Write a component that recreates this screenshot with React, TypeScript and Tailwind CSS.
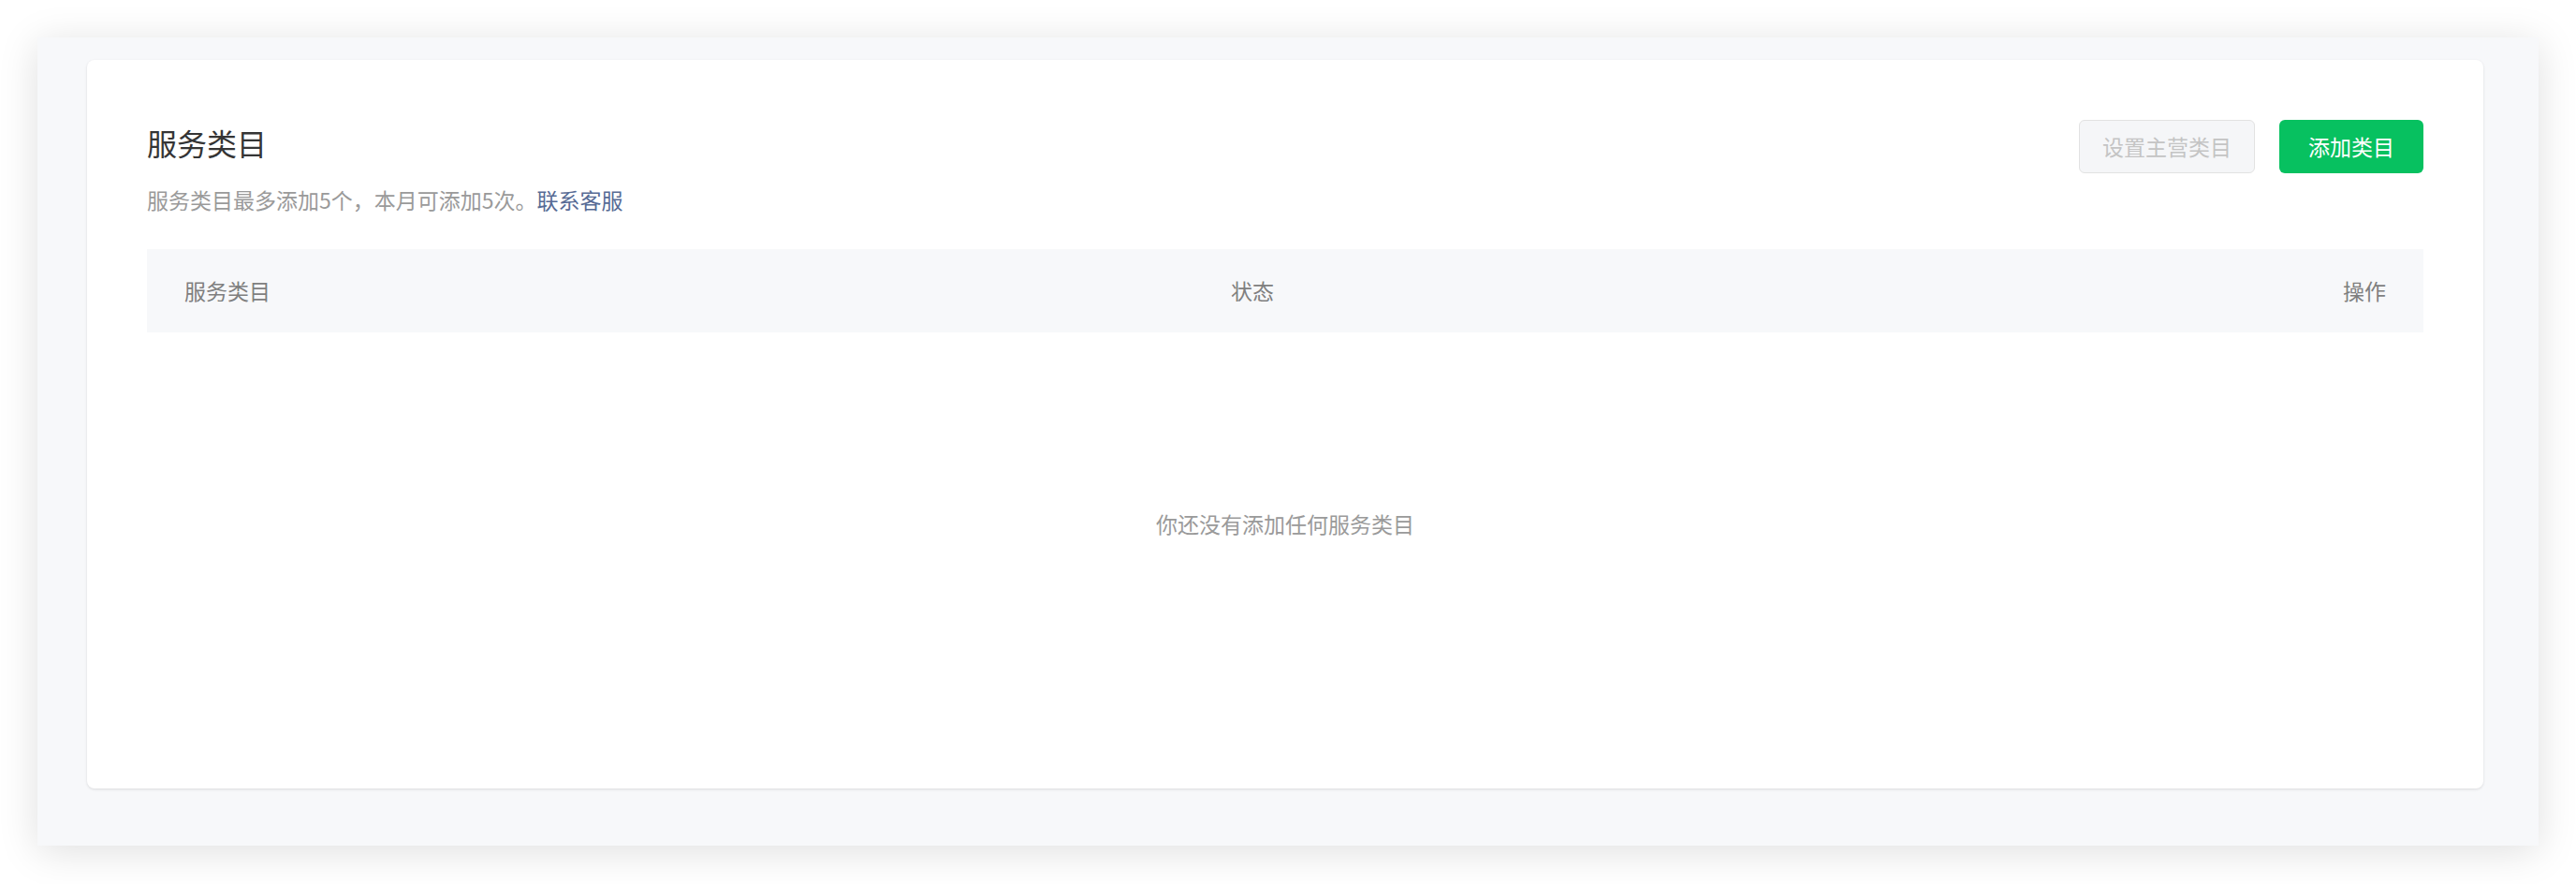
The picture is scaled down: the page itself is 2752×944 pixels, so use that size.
export default function App() {
  return (
    <div className="min-h-[944px] bg-white p-[40px] font-['Noto_Sans_CJK_SC','Noto_Sans',sans-serif]">
      <div className="bg-[#f7f8fa] pl-[53px] pr-[59px] pt-[24px] pb-[61px] shadow-[0_6px_40px_rgba(0,0,0,0.13)]">
        <div className="rounded-[8px] bg-white px-[64px] pt-[64px] pb-[79px] shadow-[0_1px_3px_rgba(0,0,0,0.12)]">
          <div className="flex items-start justify-between">
            <div>
              <h1 className="text-[32px] leading-[48px] font-normal text-[#353535]">服务类目</h1>
              <p className="mt-[20px] text-[23px] leading-[34px] text-[#9a9a9a]">
                服务类目最多添加5个，本月可添加5次。
                <a className="text-[#576b95]">联系客服</a>
              </p>
            </div>
            <div className="flex gap-[26px]">
              <button className="flex h-[57px] w-[188px] items-center justify-center rounded-[6px] border border-[#e2e2e2] bg-[#f5f6f8] text-[23px] text-[#c4c4c4]">
                设置主营类目
              </button>
              <button className="flex h-[57px] w-[154px] items-center justify-center rounded-[6px] bg-[#07c160] text-[23px] text-white">
                添加类目
              </button>
            </div>
          </div>

          <div className="mt-[36px]">
            <div className="grid h-[89px] grid-cols-[1118px_1fr_auto] items-center bg-[#f7f8fa] px-[40px] text-[23px] text-[#7f7f7f]">
              <div>服务类目</div>
              <div>状态</div>
              <div className="text-right">操作</div>
            </div>
            <div className="flex h-[408px] items-center justify-center text-[23px] text-[#9a9a9a]">
              你还没有添加任何服务类目
            </div>
          </div>
        </div>
      </div>
    </div>
  )
}
